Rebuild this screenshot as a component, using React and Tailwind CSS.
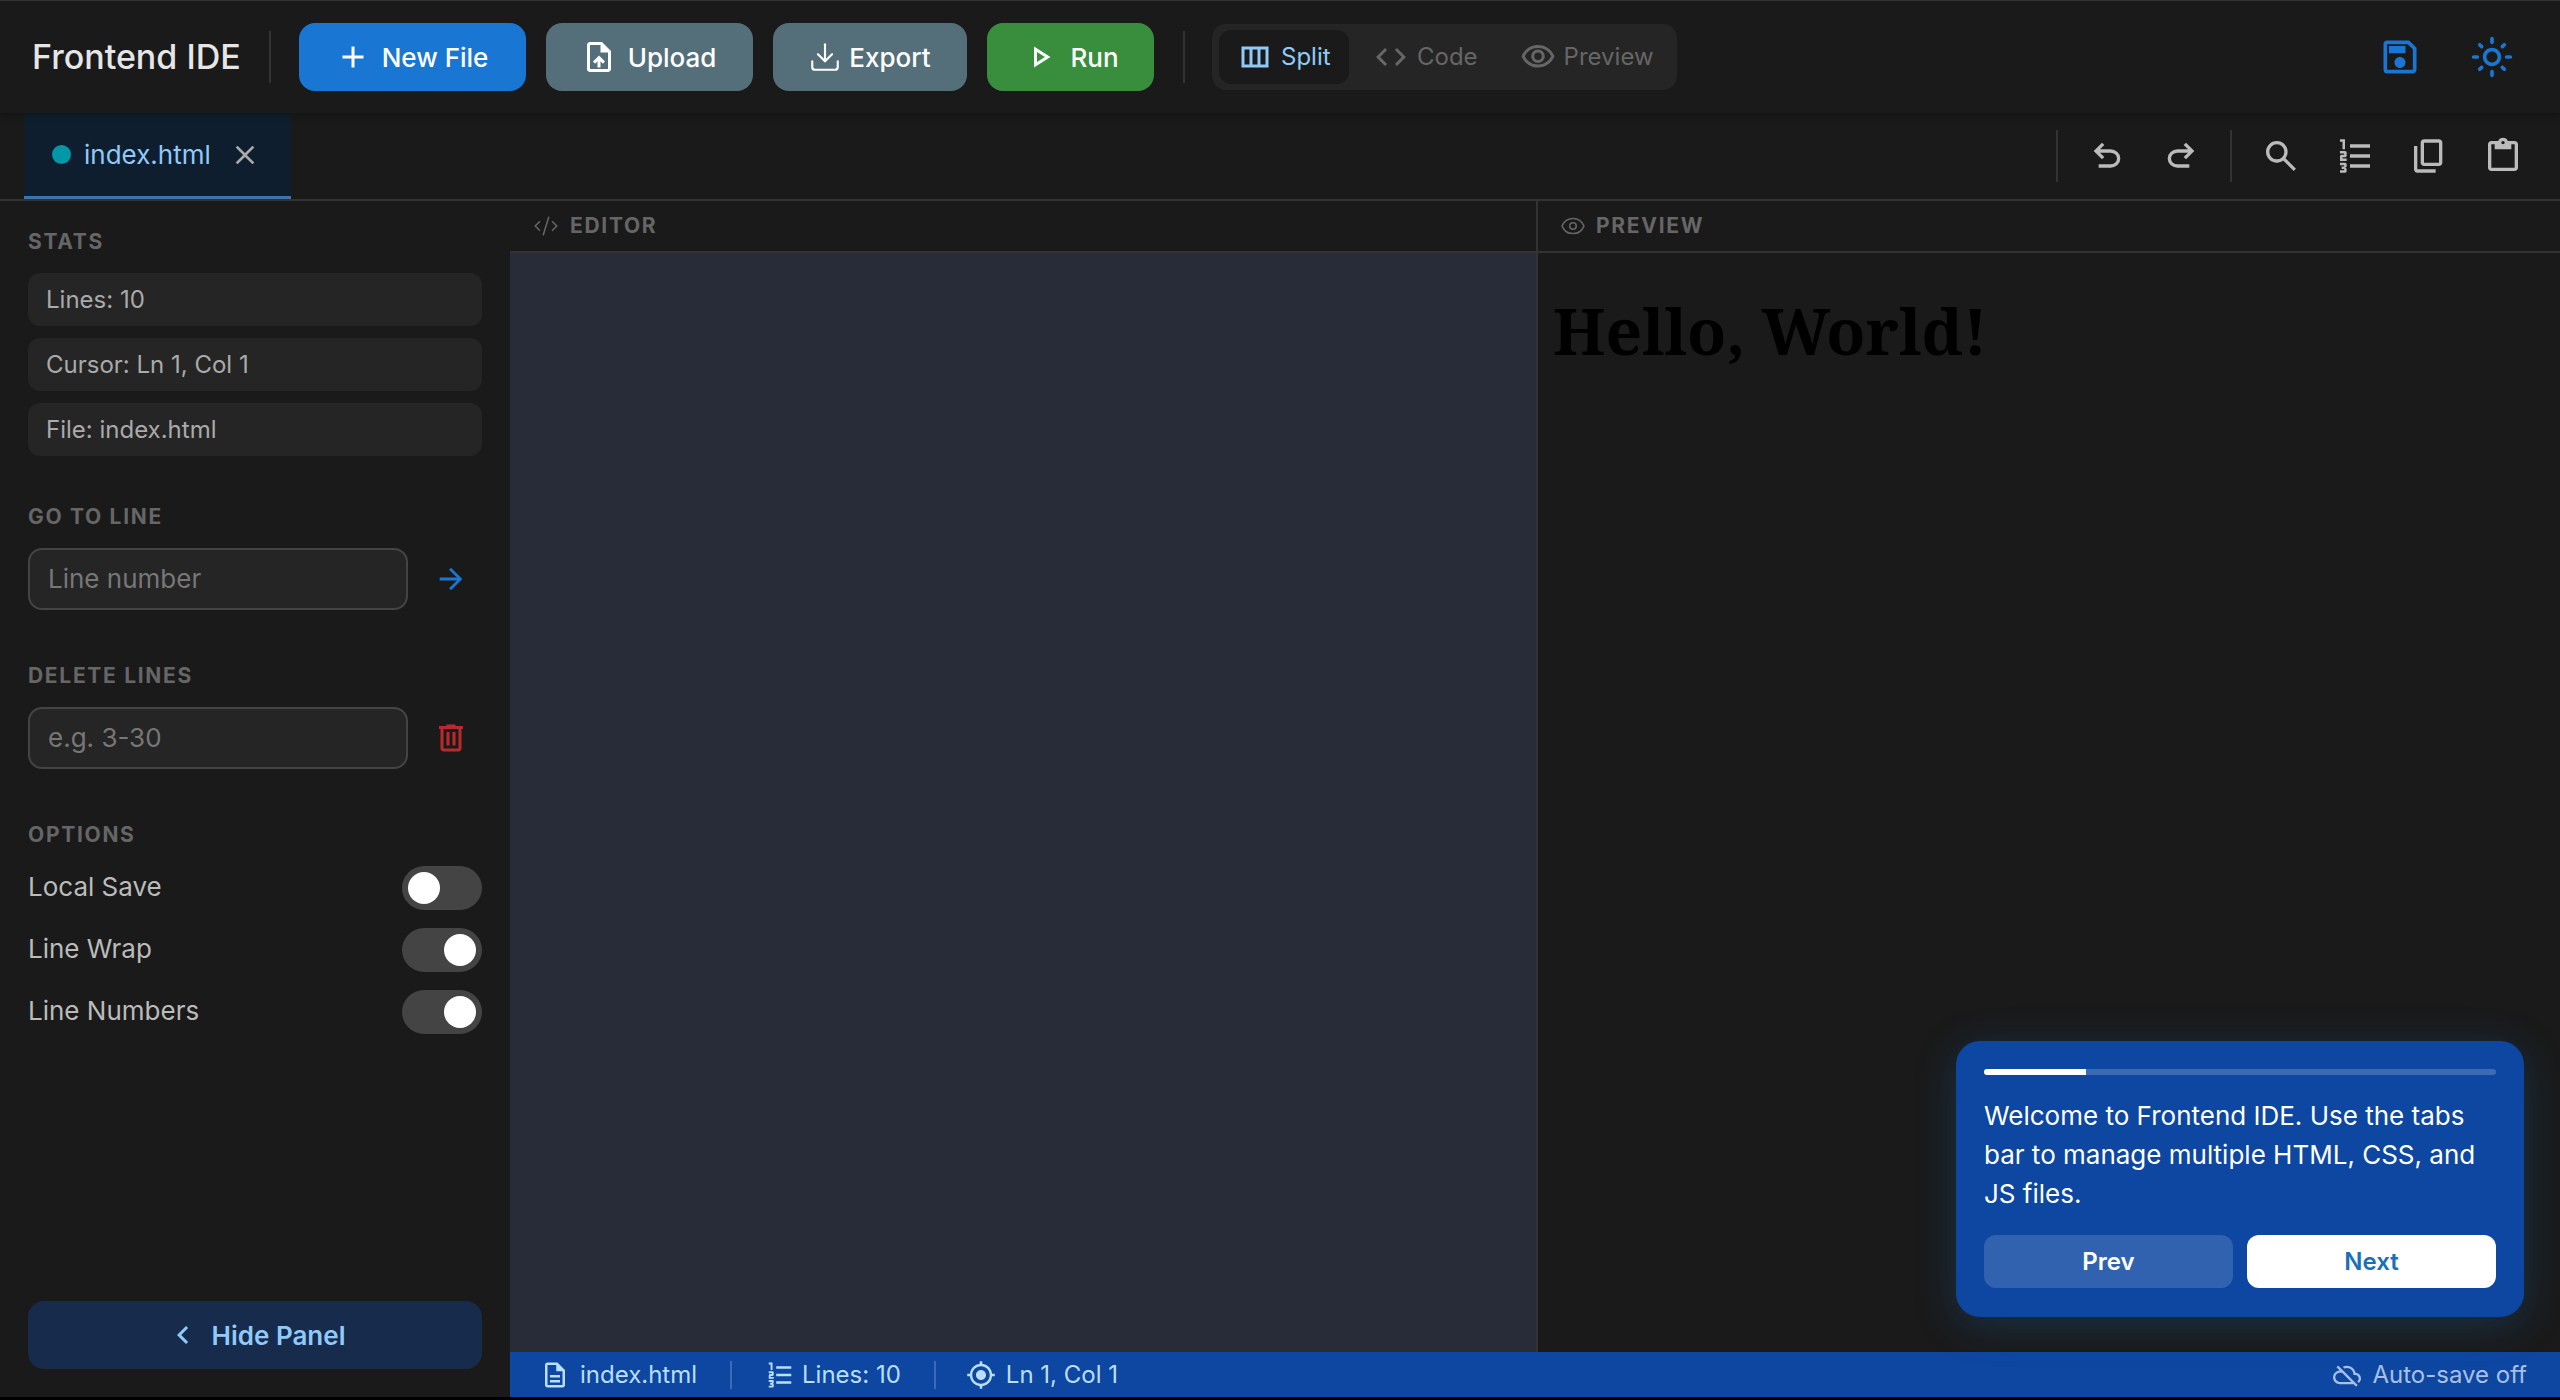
import React from "react";
import {
  MdAdd, MdOutlineUploadFile, MdOutlinePlayArrow, MdOutlineViewColumn, MdCode, MdOutlineVisibility,
  MdOutlineSave, MdOutlineLightMode, MdClose, MdArrowForward, MdChevronLeft,
  MdOutlineDescription, MdGpsFixed, MdOutlineCloudOff,
} from "react-icons/md";
import { Download, CodeXml, Eye } from "lucide-react";

const sym = {
  undo: "M280-200v-80h284q63 0 109.5-40T720-420q0-60-46.5-100T564-560H312l104 104-56 56-200-200 200-200 56 56-104 104h252q97 0 166.5 63T800-420q0 94-69.5 157T564-200H280Z",
  redo: "M396-200q-97 0-166.5-63T160-420q0-94 69.5-157T396-640h252L544-744l56-56 200 200-200 200-56-56 104-104H396q-63 0-109.5 40T240-420q0 60 46.5 100T396-280h284v80H396Z",
  search: "M784-120 532-372q-30 24-69 38t-83 14q-109 0-184.5-75.5T120-580q0-109 75.5-184.5T380-840q109 0 184.5 75.5T640-580q0 44-14 83t-38 69l252 252-56 56ZM380-400q75 0 127.5-52.5T560-580q0-75-52.5-127.5T380-760q-75 0-127.5 52.5T200-580q0 75 52.5 127.5T380-400Z",
  list: "M120-80v-60h100v-30h-60v-60h60v-30H120v-60h120q17 0 28.5 11.5T280-280v40q0 17-11.5 28.5T240-200q17 0 28.5 11.5T280-160v40q0 17-11.5 28.5T240-80H120Zm0-280v-110q0-17 11.5-28.5T160-510h60v-30H120v-60h120q17 0 28.5 11.5T280-560v70q0 17-11.5 28.5T240-450h-60v30h100v60H120Zm60-280v-180h-60v-60h120v240h-60Zm180 440v-80h480v80H360Zm0-240v-80h480v80H360Zm0-240v-80h480v80H360Z",
  copy: "M360-240q-33 0-56.5-23.5T280-320v-480q0-33 23.5-56.5T360-880h360q33 0 56.5 23.5T800-800v480q0 33-23.5 56.5T720-240H360Zm0-80h360v-480H360v480ZM200-80q-33 0-56.5-23.5T120-160v-560h80v560h440v80H200Zm160-240v-480 480Z",
  paste: "M200-120q-33 0-56.5-23.5T120-200v-560q0-33 23.5-56.5T200-840h167q11-35 43-57.5t70-22.5q40 0 71.5 22.5T594-840h166q33 0 56.5 23.5T840-760v560q0 33-23.5 56.5T760-120H200Zm0-80h560v-560h-80v120H280v-120h-80v560Zm280-560q17 0 28.5-11.5T520-800q0-17-11.5-28.5T480-840q-17 0-28.5 11.5T440-800q0 17 11.5 28.5T480-760Z",
  trash: "M280-120q-33 0-56.5-23.5T200-200v-520h-40v-80h200v-40h240v40h200v80h-40v520q0 33-23.5 56.5T680-120H280Zm400-600H280v520h400v-520ZM360-280h80v-360h-80v360Zm160 0h80v-360h-80v360Z",
};

function Sym({ name, size = 40, className = "" }) {
  return (
    <svg viewBox="0 -960 960 960" width={size} height={size} fill="currentColor" className={className}>
      <path d={sym[name]} />
    </svg>
  );
}

function ActionButton({ className, icon, children }) {
  return (
    <button className={`h-[68px] rounded-[16px] flex items-center justify-center text-[26px] font-medium text-white ${className}`}>
      {icon}
      {children}
    </button>
  );
}

function ModeItem({ active, icon, children, className = "" }) {
  return (
    <div className={`h-[54px] rounded-[12px] flex items-center gap-[8px] text-[24px] ${active ? "bg-[#1a1a1a] text-[#90caf9]" : "text-[#666666]"} ${className}`}>
      {icon}
      {children}
    </div>
  );
}

function ToolIcon({ children }) {
  return <button className="w-[74px] h-[74px] flex items-center justify-center text-[#bbbbbb]">{children}</button>;
}

function SectionTitle({ children, className = "" }) {
  return (
    <div className={`h-[32px] pt-[2px] mb-[16px] flex items-center text-[21px] font-bold tracking-[1.7px] text-[#666666] ${className}`}>
      {children}
    </div>
  );
}

function Stat({ children }) {
  return (
    <div className="h-[53px] rounded-[12px] bg-[#252525] px-[18px] flex items-center text-[24px] text-[#aaaaaa]">
      {children}
    </div>
  );
}

function Toggle({ label, on }) {
  return (
    <div className="h-[44px] flex items-center justify-between">
      <span className="text-[26px] leading-[40px] pb-[2px] text-[#bbbbbb]">{label}</span>
      <span className={`w-[80px] h-[44px] rounded-full bg-[#444444] p-[6px] flex ${on ? "justify-end" : "justify-start"}`}>
        <span className="w-[32px] h-[32px] rounded-full bg-white" />
      </span>
    </div>
  );
}

function SideInput({ placeholder, children }) {
  return (
    <div className="flex items-center">
      <input
        placeholder={placeholder}
        className="w-[380px] h-[62px] rounded-[14px] border-2 border-[#444444] bg-[#252525] px-[18px] pb-[2px] text-[26px] text-[#bbbbbb] placeholder:text-[#777777] outline-none"
      />
      <button className="ml-[12px] w-[62px] h-[62px] flex items-center justify-center">{children}</button>
    </div>
  );
}

function PanelHeader({ icon, children }) {
  return (
    <div className="h-[52px] pl-[22px] border-b-2 border-[#333333] flex items-center gap-[10px] text-[21px] font-bold tracking-[1.7px] text-[#666666] bg-[#1a1a1a] shrink-0">
      {icon}
      {children}
    </div>
  );
}

function StatusDivider() {
  return <span className="block w-[2px] h-[28px] bg-white/20" />;
}

export default function App() {
  return (
    <div className="h-[1400px] bg-black overflow-hidden font-['Inter','Noto_Sans',sans-serif]">
      <div className="h-[1397px] flex flex-col bg-[#1a1a1a]">
        <header className="relative z-10 h-[113px] shrink-0 border-t border-[#333333] bg-[#1a1a1a] shadow-[0_2px_8px_rgba(0,0,0,0.3)] flex items-center pl-[32px]">
          <h1 className="w-[237px] text-[34px] font-medium text-[#e6e6e6] leading-none whitespace-nowrap">Frontend IDE</h1>
          <span className="w-[2px] h-[52px] bg-[#333333]" />
          <div className="ml-[28px] flex items-center gap-[20px]">
            <ActionButton className="w-[227px] gap-[11px] pr-[2px] bg-[#1976d2]" icon={<MdAdd size={36} />}>New File</ActionButton>
            <ActionButton className="w-[207px] gap-[11px] pr-[2px] bg-[#546e7a]" icon={<MdOutlineUploadFile size={36} />}>Upload</ActionButton>
            <ActionButton className="w-[194px] gap-[7px] pr-[1px] bg-[#546e7a]" icon={<Download size={34} strokeWidth={1.5} />}>Export</ActionButton>
            <ActionButton className="w-[167px] gap-[12px] bg-[#388e3c]" icon={<MdOutlinePlayArrow size={36} />}>Run</ActionButton>
          </div>
          <span className="ml-[29px] w-[2px] h-[52px] bg-[#333333]" />
          <div className="ml-[27px] w-[465px] h-[66px] rounded-[14px] bg-[#252525] px-[7px] flex items-center">
            <ModeItem active icon={<MdOutlineViewColumn size={36} />} className="w-[130px] pl-[18px]">Split</ModeItem>
            <ModeItem icon={<MdCode size={36} />} className="ml-[24px] gap-[7px]">Code</ModeItem>
            <ModeItem icon={<MdOutlineVisibility size={36} />} className="ml-[42px]">Preview</ModeItem>
          </div>
          <div className="ml-auto pr-[22px] flex items-center text-[#1976d2]">
            <button className="w-[92px] h-[92px] flex items-center justify-center"><MdOutlineSave size={44} /></button>
            <button className="w-[92px] h-[92px] flex items-center justify-center"><MdOutlineLightMode size={44} /></button>
          </div>
        </header>

        <div className="h-[88px] shrink-0 border-b-2 border-[#333333] flex items-stretch pl-[24px] pr-[20px]">
          <div className="w-[267px] bg-[#0f1e2e] border-b-[3px] border-[#3d74ae] flex items-center pl-[28px]">
            <span className="w-[19px] h-[19px] rounded-full bg-[#0097a7]" />
            <span className="ml-[13px] text-[26px] text-[#90caf9]">index.html</span>
            <MdClose size={32} className="ml-[18px] text-[#aaaaaa]" />
          </div>
          <div className="ml-auto flex items-center">
            <span className="w-[2px] h-[52px] bg-[#333333] mx-[12px]" />
            <ToolIcon><Sym name="undo" /></ToolIcon>
            <ToolIcon><Sym name="redo" /></ToolIcon>
            <span className="w-[2px] h-[52px] bg-[#333333] mx-[12px]" />
            <ToolIcon><Sym name="search" /></ToolIcon>
            <ToolIcon><Sym name="list" /></ToolIcon>
            <ToolIcon><Sym name="copy" /></ToolIcon>
            <ToolIcon><Sym name="paste" /></ToolIcon>
          </div>
        </div>

        <div className="flex-1 min-h-0 flex">
          <aside className="w-[510px] shrink-0 flex flex-col px-[28px] pt-[24px] pb-[28px]">
            <SectionTitle>STATS</SectionTitle>
            <div className="flex flex-col gap-[12px]">
              <Stat>Lines: 10</Stat>
              <Stat>Cursor: Ln 1, Col 1</Stat>
              <Stat>File: index.html</Stat>
            </div>
            <SectionTitle className="mt-[44px]">GO TO LINE</SectionTitle>
            <SideInput placeholder="Line number"><MdArrowForward size={34} className="text-[#1976d2]" /></SideInput>
            <SectionTitle className="mt-[49px]">DELETE LINES</SectionTitle>
            <SideInput placeholder="e.g. 3-30"><Sym name="trash" size={36} className="text-[#b92b2b]" /></SideInput>
            <SectionTitle className="mt-[49px]">OPTIONS</SectionTitle>
            <div className="flex flex-col gap-[18px]">
              <Toggle label="Local Save" />
              <Toggle label="Line Wrap" on />
              <Toggle label="Line Numbers" on />
            </div>
            <button className="mt-auto h-[68px] rounded-[16px] bg-[#172b4d] text-[#90caf9] text-[26px] font-semibold flex items-center justify-center gap-[11px]">
              <MdChevronLeft size={36} />
              Hide Panel
            </button>
          </aside>

          <main className="relative flex-1 min-w-0 flex flex-col">
            <div className="flex-1 min-h-0 flex">
              <section className="w-[1026px] shrink-0 flex flex-col">
                <PanelHeader icon={<CodeXml size={26} strokeWidth={1.4} className="mx-[1px]" />}>EDITOR</PanelHeader>
                <div className="flex-1 bg-[#282c38]" />
              </section>
              <section className="flex-1 min-w-0 flex flex-col border-l-2 border-[#333333]">
                <PanelHeader icon={<Eye size={26} strokeWidth={1.4} />}>PREVIEW</PanelHeader>
                <div className="flex-1 pl-[15px] pr-[16px] pt-[40px]">
                  <h2 className="font-['Noto_Serif','DejaVu_Serif',serif] text-[64px] leading-[75px] font-bold text-black">Hello, World!</h2>
                </div>
              </section>
            </div>

            <footer className="h-[45px] shrink-0 bg-[#0d47a1] flex items-center pl-[30px] pr-[33px] text-[24px] text-[#bbdefb]">
              <span className="flex items-center gap-[10px]"><MdOutlineDescription size={30} />index.html</span>
              <span className="mx-[33px]"><StatusDivider /></span>
              <span className="flex items-center gap-[7px]"><Sym name="list" size={30} />Lines: 10</span>
              <span className="ml-[33px] mr-[30px]"><StatusDivider /></span>
              <span className="flex items-center gap-[10px]"><MdGpsFixed size={30} />Ln 1, Col 1</span>
              <span className="ml-auto flex items-center gap-[11px] text-[#a9c0e4]"><MdOutlineCloudOff size={28} />Auto-save off</span>
            </footer>

            <div className="absolute right-[36px] bottom-[80px] w-[568px] h-[276px] rounded-[24px] bg-[#0d47a1] p-[28px] shadow-[0_8px_40px_rgba(25,118,210,0.25)]">
              <div className="h-[6px] rounded-full bg-white/20 overflow-hidden">
                <div className="h-full w-1/5 bg-white" />
              </div>
              <p className="mt-[21px] text-[26px] leading-[39px] text-white">Welcome to Frontend IDE. Use the tabs bar to manage multiple HTML, CSS, and JS files.</p>
              <div className="mt-[22px] flex gap-[14px]">
                <button className="flex-1 h-[53px] rounded-[12px] bg-white/15 text-white text-[24px] font-semibold">Prev</button>
                <button className="flex-1 h-[53px] rounded-[12px] bg-white text-[#1a6fba] text-[24px] font-semibold">Next</button>
              </div>
            </div>
          </main>
        </div>
      </div>
    </div>
  );
}
